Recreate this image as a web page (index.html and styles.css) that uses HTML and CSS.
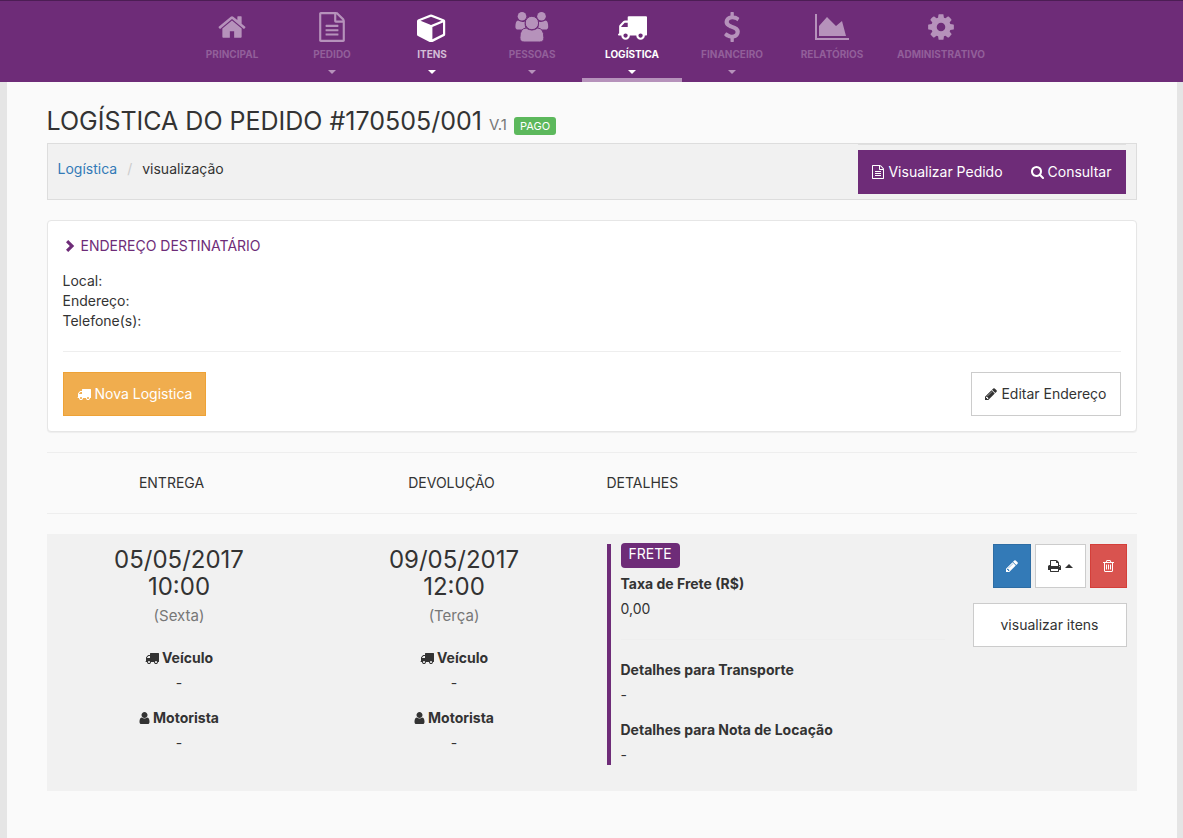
FILE: index.html
```html
<!DOCTYPE html>
<html lang="pt-BR">
<head>
<meta charset="utf-8">
<title>Logística do Pedido</title>
<link rel="stylesheet" href="styles.css">
</head>
<body>
<svg class="sprite" aria-hidden="true">
  <symbol id="truck" viewBox="0 0 1792 1792"><path d="M640 1408q0-52-38-90t-90-38-90 38-38 90 38 90 90 38 90-38 38-90zm-384-512h384v-256h-158q-13 0-22 9l-195 195q-9 9-9 22v30zm1280 512q0-52-38-90t-90-38-90 38-38 90 38 90 90 38 90-38 38-90zm256-1088v1024q0 15-4 26.500t-13.500 18.500-16.500 11.500-23.500 6-22.500 2-25.500 0-22.500-.5q0 106-75 181t-181 75-181-75-75-181h-384q0 106-75 181t-181 75-181-75-75-181h-64q-3 0-22.500.5t-25.500 0-22.500-2-23.500-6-16.500-11.500-13.500-18.500-4-26.500q0-26 19-45t45-19v-320q0-8-.5-35t0-38 2.500-34.500 6.500-37 14-30.500 22.500-30l198-198q19-19 50.500-32t58.500-13h160v-192q0-26 19-45t45-19h1024q26 0 45 19t19 45z"/></symbol>
  <symbol id="home" viewBox="0 0 1792 1792"><path d="M1472 992v480q0 26-19 45t-45 19h-384v-384h-256v384h-384q-26 0-45-19t-19-45v-480q0-1 .5-3t.5-3l575-474 575 474q1 2 1 6zm223-69l-62 74q-8 9-21 11h-3q-13 0-21-7l-692-577-692 577q-12 8-24 7-13-2-21-11l-62-74q-8-10-7-23.500t11-21.500l719-599q32-26 76-26t76 26l244 204v-195q0-14 9-23t23-9h192q14 0 23 9t9 23v408l219 182q10 8 11 21.500t-7 23.500z"/></symbol>
  <symbol id="file" viewBox="128 0 1536 1792"><path d="M1596 380q28 28 48 76t20 88v1152q0 40-28 68t-68 28h-1344q-40 0-68-28t-28-68v-1600q0-40 28-68t68-28h896q40 0 88 20t76 48zm-444-244v376h376q-10-29-22-41l-313-313q-12-12-41-22zm384 1528v-1024h-416q-40 0-68-28t-28-68v-416h-768v1536h1280zm-1024-864q0-14 9-23t23-9h704q14 0 23 9t9 23v64q0 14-9 23t-23 9h-704q-14 0-23-9t-9-23v-64zm736 224q14 0 23 9t9 23v64q0 14-9 23t-23 9h-704q-14 0-23-9t-9-23v-64q0-14 9-23t23-9h704zm0 256q14 0 23 9t9 23v64q0 14-9 23t-23 9h-704q-14 0-23-9t-9-23v-64q0-14 9-23t23-9h704z"/></symbol>
  <symbol id="cube" viewBox="1 -1 30 30"><path fill-rule="evenodd" d="M15 1.500q.6 0 1.200.3l12 4.600q1 .5 1 1.600v13.600q0 1-.9 1.500l-12.300 6.200q-.9.500-1.800 0l-12.200-6.200q-1-.5-1-1.500v-13.600q0-1.100 1-1.600l11.800-4.600q.6-.3 1.200-.3zM15 3.700l-10.500 4 10.500 4.200 10.500-4.200zM27 9.600l-10.600 4.500v12.200l10.600-5.400z"/></symbol>
  <symbol id="group" viewBox="0 0 34 30"><circle cx="7" cy="4.300" r="4.300"/><circle cx="26.500" cy="4.300" r="4.300"/><circle cx="16.900" cy="11" r="6.200"/><path d="M3 8.600q4 2.400 7 .9-1 5 1.500 8h-8.500q-2.600 0-2.600-2.800 0-5.500 2.600-6.100zM30.600 8.600q-4 2.400-7 .9 1 5-1.500 8h8.500q2.600 0 2.600-2.800 0-5.500-2.600-6.100z"/><path class="cutout" d="M11.200 16q5.700 4 11.400 0 6.300.4 6.300 9.800 0 4.200-4.200 4.200h-15.600q-4.200 0-4.200-4.200 0-9.400 6.300-9.800z"/><circle class="cutout" cx="16.900" cy="11" r="6.700"/></symbol>
  <symbol id="dollar" viewBox="0 0 1792 1792"><path d="M1362 1185q0 153-99.500 263.500t-258.500 136.500v175q0 14-9 23t-23 9h-135q-13 0-22.500-9.500t-9.500-22.500v-175q-66-9-127.500-31t-101.500-44.500-74-48-46.500-37.500-17.500-18q-17-21-2-41l103-135q7-10 23-12 15-2 24 9l2 2q113 99 243 125 37 8 74 8 81 0 142.500-43t61.500-122q0-28-15-53t-33.500-42-58.500-37.500-66-32-80-32.500q-39-16-61.500-25t-61.500-26.500-62.500-31-56.500-35.500-53.500-42.500-43.500-49-35.500-58-21-66.500-8.500-78q0-138 98-242t255-134v-180q0-13 9.500-22.500t22.500-9.500h135q14 0 23 9t9 23v176q57 6 110.500 23t87 33.500 63.500 37.500 39 29 15 14q17 18 5 38l-81 146q-8 15-23 16-14 3-27-7-3-3-14.500-12t-39-26.500-58.500-32-74.500-26-85.500-11.500q-95 0-155 43t-60 111q0 26 8.500 48t29.500 41.500 39.500 33 56 31 60.500 27 70 27.500q53 20 81 31.500t76 35 75.500 42.500 62 50 53 63.500 31.500 76.500 13 94z"/></symbol>
  <symbol id="chart" viewBox="0 0 34 30"><path d="M0 2h2v24h32v2H0zM4 14l8-9 9 9 6-5 4 15H4z"/></symbol>
  <symbol id="cog" viewBox="0 0 1792 1792"><path d="M1152 896q0-106-75-181t-181-75-181 75-75 181 75 181 181 75 181-75 75-181zm512-109v222q0 12-8 23t-20 13l-185 28q-19 54-39 91 35 50 107 138 10 12 10 25t-9 23q-27 37-99 108t-94 71q-12 0-26-9l-138-108q-44 23-91 38-16 136-29 186-7 28-36 28h-222q-14 0-24.500-8.500t-11.500-21.500l-28-184q-49-16-90-37l-141 107q-10 9-25 9-14 0-25-11-126-114-165-168-7-10-7-23 0-12 8-23 15-21 51-66.500t54-70.500q-27-50-41-99l-183-27q-13-2-21-12.500t-8-23.500v-222q0-12 8-23t19-13l186-28q14-46 39-92-40-57-107-138-10-12-10-24 0-10 9-23 26-36 98.500-107.500t94.500-71.500q13 0 26 10l138 107q44-23 91-38 16-136 29-186 7-28 36-28h222q14 0 24.500 8.500t11.500 21.500l28 184q49 16 90 37l142-107q9-9 24-9 13 0 25 10 129 119 165 170 7 8 7 22 0 12-8 23-15 21-51 66.500t-54 70.500q26 50 41 98l183 28q13 2 21 12.500t8 23.500z"/></symbol>
  <symbol id="search" viewBox="64 0 1664 1792"><path d="M1216 832q0-185-131.500-316.500t-316.500-131.500-316.500 131.500-131.500 316.500 131.500 316.500 316.500 131.500 316.500-131.500 131.500-316.500zm512 832q0 52-38 90t-90 38q-54 0-90-38l-343-342q-179 124-399 124-143 0-273.500-55.500t-225-150-150-225-55.500-273.500 55.500-273.500 150-225 225-150 273.500-55.500 273.500 55.500 225 150 150 225 55.500 273.500q0 220-124 399l343 343q37 37 37 90z"/></symbol>
  <symbol id="pencil" viewBox="128 0 1536 1792"><path d="M491 1536l91-91-235-235-91 91v107h128v128h107zm523-928q0-22-22-22-10 0-17 7l-542 542q-7 7-7 17 0 22 22 22 10 0 17-7l542-542q7-7 7-17zm-54-192l416 416-832 832h-416v-416zm683 96q0 53-37 90l-166 166-416-416 166-165q36-38 90-38 53 0 91 38l235 234q37 39 37 91z"/></symbol>
  <symbol id="user" viewBox="192 0 1408 1792"><path d="M1536 1399q0 109-62.500 187t-150.500 78h-854q-88 0-150.500-78t-62.500-187q0-85 8.500-160.500t31.500-152 58.500-131 94-89 134.500-34.500q131 128 313 128t313-128q76 0 134.500 34.500t94 89 58.500 131 31.500 152 8.500 160.500zm-256-887q0 159-112.500 271.500t-271.500 112.500-271.500-112.500-112.500-271.500 112.500-271.500 271.500-112.500 271.500 112.500 112.500 271.500z"/></symbol>
  <symbol id="print" viewBox="64 0 1664 1792"><path d="M448 1536h896v-256h-896v256zm0-640h896v-384h-160q-40 0-68-28t-28-68v-160h-640v640zm1152 64q0-26-19-45t-45-19-45 19-19 45 19 45 45 19 45-19 19-45zm128 0v416q0 13-9.500 22.500t-22.500 9.500h-224v160q0 40-28 68t-68 28h-960q-40 0-68-28t-28-68v-160h-224q-13 0-22.500-9.500t-9.500-22.500v-416q0-79 56.500-135.500t135.500-56.500h64v-544q0-40 28-68t68-28h672q40 0 88 20t76 48l152 152q28 28 48 76t20 88v256h64q79 0 135.500 56.500t56.500 135.500z"/></symbol>
  <symbol id="trash" viewBox="192 0 1408 1792"><path d="M704 736v576q0 14-9 23t-23 9h-64q-14 0-23-9t-9-23v-576q0-14 9-23t23-9h64q14 0 23 9t9 23zm256 0v576q0 14-9 23t-23 9h-64q-14 0-23-9t-9-23v-576q0-14 9-23t23-9h64q14 0 23 9t9 23zm256 0v576q0 14-9 23t-23 9h-64q-14 0-23-9t-9-23v-576q0-14 9-23t23-9h64q14 0 23 9t9 23zm128 724v-948h-896v948q0 22 7 40.500t14.500 27 10.500 8.500h832q3 0 10.500-8.500t14.500-27 7-40.500zm-672-1076h448l-48-117q-7-9-17-11h-317q-10 2-17 11zm928 32v64q0 14-9 23t-23 9h-96v948q0 83-47 143.500t-113 60.500h-832q-66 0-113-58.500t-47-141.500v-952h-96q-14 0-23-9t-9-23v-64q0-14 9-23t23-9h309l70-167q15-37 54-63t79-26h320q40 0 79 26t54 63l70 167h309q14 0 23 9t9 23z"/></symbol>
  <symbol id="chevron" viewBox="0 0 14 14"><path d="M3 3.200L5.200 1l6 6-6 6L3 10.800 6.800 7z"/></symbol>
</svg>

<nav class="topnav">
  <a class="nav-item" href="#"><svg class="nav-icon"><use href="#home"/></svg><span>PRINCIPAL</span></a>
  <a class="nav-item" href="#"><svg class="nav-icon"><use href="#file"/></svg><span>PEDIDO</span><i class="caret"></i></a>
  <a class="nav-item hover" href="#"><svg class="nav-icon"><use href="#cube"/></svg><span>ITENS</span><i class="caret"></i></a>
  <a class="nav-item" href="#"><svg class="nav-icon wide"><use href="#group"/></svg><span>PESSOAS</span><i class="caret"></i></a>
  <a class="nav-item active" href="#"><svg class="nav-icon"><use href="#truck"/></svg><span>LOGÍSTICA</span><i class="caret"></i></a>
  <a class="nav-item" href="#"><svg class="nav-icon"><use href="#dollar"/></svg><span>FINANCEIRO</span><i class="caret"></i></a>
  <a class="nav-item" href="#"><svg class="nav-icon wide"><use href="#chart"/></svg><span>RELATÓRIOS</span></a>
  <a class="nav-item" href="#"><svg class="nav-icon"><use href="#cog"/></svg><span>ADMINISTRATIVO</span></a>
</nav>

<main class="page">
  <h1 class="title">LOGÍSTICA DO PEDIDO #170505/001 <small class="version">V.1</small> <span class="badge">PAGO</span></h1>

  <div class="crumbbar">
    <div class="crumbs"><a href="#">Logística</a><span class="slash">/</span><span>visualização</span></div>
    <div class="crumb-actions">
      <button class="btn purple" type="button"><svg class="icon w12"><use href="#file"/></svg>Visualizar Pedido</button>
      <button class="btn purple" type="button"><svg class="icon w13"><use href="#search"/></svg>Consultar</button>
    </div>
  </div>

  <section class="panel">
    <h2 class="panel-title"><svg class="icon"><use href="#chevron"/></svg>ENDEREÇO DESTINATÁRIO</h2>
    <div>Local:</div>
    <div>Endereço:</div>
    <div>Telefone(s):</div>
    <hr>
    <div class="panel-actions">
      <button class="btn orange" type="button"><svg class="icon"><use href="#truck"/></svg>Nova Logistica</button>
      <button class="btn" type="button"><svg class="icon w12"><use href="#pencil"/></svg>Editar Endereço</button>
    </div>
  </section>

  <hr>
  <div class="heads">
    <div>ENTREGA</div>
    <div>DEVOLUÇÃO</div>
    <div class="head-detail">DETALHES</div>
  </div>
  <hr>

  <section class="entry">
    <div class="entry-grid">
      <div class="moment">
        <h3 class="date">05/05/2017<br>10:00</h3>
        <p class="weekday">(Sexta)</p>
        <dl>
          <dt><svg class="icon"><use href="#truck"/></svg>Veículo</dt><dd>-</dd>
          <dt><svg class="icon w11"><use href="#user"/></svg>Motorista</dt><dd>-</dd>
        </dl>
      </div>
      <div class="moment">
        <h3 class="date">09/05/2017<br>12:00</h3>
        <p class="weekday">(Terça)</p>
        <dl>
          <dt><svg class="icon"><use href="#truck"/></svg>Veículo</dt><dd>-</dd>
          <dt><svg class="icon w11"><use href="#user"/></svg>Motorista</dt><dd>-</dd>
        </dl>
      </div>
      <div class="detail-col">
        <div class="detail">
          <span class="tag">FRETE</span>
          <dl>
            <dt>Taxa de Frete (R$)</dt><dd>0,00</dd>
          </dl>
          <hr>
          <dl>
            <dt>Detalhes para Transporte</dt><dd>-</dd>
            <dt>Detalhes para Nota de Locação</dt><dd>-</dd>
          </dl>
        </div>
        <div class="actions">
          <div class="action-row">
            <button class="btn blue" type="button" aria-label="Editar"><svg class="icon w12"><use href="#pencil"/></svg></button>
            <button class="btn" type="button" aria-label="Imprimir"><svg class="icon w13"><use href="#print"/></svg><i class="caret up"></i></button>
            <button class="btn red" type="button" aria-label="Excluir"><svg class="icon w11"><use href="#trash"/></svg></button>
          </div>
          <button class="btn" type="button">visualizar itens</button>
        </div>
      </div>
    </div>
  </section>
</main>
</body>
</html>
```

FILE: styles.css
```css
* { box-sizing: border-box; }

body {
  margin: 0;
  min-height: 100vh;
  display: flex;
  flex-direction: column;
  background: #e5e5e5;
  color: #333;
  font: 14px/20px Inter, "Open Sans", sans-serif;
}

.sprite { position: absolute; width: 0; height: 0; }
svg { fill: currentColor; }
.cutout { stroke: #6e2c78; stroke-width: 1px; }

h1, h2, h3, p, dl, dd { margin: 0; font-weight: 400; }
hr { margin: 20px 0; border: 0; border-top: 1px solid #eee; }

/* Top navigation */
.topnav {
  display: flex;
  justify-content: center;
  height: 82px;
  padding-right: 1px;
  background: #6e2c78;
  border-top: 1px solid #4c1d54;
}
.nav-item {
  min-width: 100px;
  padding: 11px 15px 0;
  display: flex;
  flex-direction: column;
  align-items: center;
  color: #b692bb;
  text-decoration: none;
  font-size: 10px;
  font-weight: 700;
  border-bottom: 4px solid transparent;
}
.nav-item span { line-height: 14px; margin-top: 5px; color: #925f9a; }
.nav-icon { width: 30px; height: 30px; }
.nav-icon.wide { width: 34px; }
.nav-item .caret { margin-top: 9px; }
.nav-item.hover, .nav-item.active { color: #fff; }
.nav-item.hover span { color: #d3bdd6; }
.nav-item.active span { color: #fff; }
.nav-item.active { border-bottom-color: #b692bb; }

.caret {
  border: 4px solid transparent;
  border-top-color: currentColor;
  border-bottom: 0;
}
.caret.up { border-top: 0; border-bottom: 4px solid currentColor; }

/* Page */
.page {
  flex: 1;
  width: 100%;
  max-width: 1170px;
  margin: 0 auto;
  padding: 25px 40px 40px;
  background: #fafafa;
}
.title { font-size: 25px; line-height: 28px; margin-bottom: 8px; }
.version { font-size: 15px; line-height: 16px; color: #777; }
.badge {
  display: inline-block;
  padding: 0 6px;
  border-radius: 3px;
  background: #5cb85c;
  color: #fff;
  font-size: 11px;
  line-height: 18px;
}

.crumbbar {
  display: flex;
  justify-content: space-between;
  min-height: 57px;
  padding: 0 10px 5px;
  border: 1px solid #ddd;
  background: #f1f1f1;
}
.crumbs { padding-top: 15px; }
.crumbs a { color: #337ab7; text-decoration: none; }
.slash { margin: 0 10px; color: #ccc; }
.crumb-actions { display: flex; border-top: 1px solid #e0e0e0; padding-top: 5px; }

.btn {
  display: inline-flex;
  align-items: center;
  justify-content: center;
  gap: 4px;
  height: 44px;
  padding: 0 13px;
  border: 1px solid #ccc;
  background: #fff;
  color: #333;
  font: inherit;
}
.icon { width: 14px; height: 14px; flex: none; }
.icon.w11 { width: 11px; }
.icon.w12 { width: 12px; }
.icon.w13 { width: 13px; }
.btn.purple { background: #6e2c78; border-color: #6e2c78; color: #fff; }
.btn.orange { background: #f0ad4e; border-color: #eea236; color: #fff; }
.btn.blue { background: #337ab7; border-color: #2e6da4; color: #fff; }
.btn.red { background: #d9534f; border-color: #d43f3a; color: #fff; }

.panel {
  margin-top: 20px;
  padding: 15px;
  border: 1px solid #e6e6e6;
  border-radius: 4px;
  background: #fff;
  box-shadow: 0 1px 1px rgba(0, 0, 0, .05);
}
.panel-title {
  display: flex;
  align-items: center;
  gap: 4px;
  margin-bottom: 15px;
  color: #6e2c78;
  font-size: 14px;
  line-height: 20px;
}
.panel-actions { display: flex; justify-content: space-between; }

/* Column headings */
.heads {
  display: grid;
  grid-template-columns: 1fr 1fr 2fr;
  margin: 0 -15px;
  text-align: center;
}
.head-detail { padding-left: 15px; text-align: left; }

/* Logistics entry */
.entry { padding: 10px 0 26px; background: #f1f1f1; }
.entry-grid { display: grid; grid-template-columns: 1fr 1fr 2fr; margin: 0 -5px; }
.moment { padding-top: 2px; text-align: center; }
.date { font-size: 24px; line-height: 27px; }
.weekday { margin: 6px 0 22px; color: #777; font-size: 15px; }
dt { display: flex; align-items: center; gap: 3px; margin-bottom: 5px; font-weight: 700; }
.moment dt { justify-content: center; }
dd + dt { margin-top: 15px; }

.detail-col {
  display: grid;
  grid-template-columns: 1fr 154px;
  gap: 28px;
  align-items: start;
  padding: 0 15px;
}
.detail { padding-left: 10px; border-left: 4px solid #6e2c78; }
.tag {
  display: block;
  width: fit-content;
  margin: -1px 0 6px;
  padding: 0 8px 3px;
  border-radius: 4px;
  background: #6e2c78;
  color: #fff;
  line-height: 22px;
}
.actions { display: flex; flex-direction: column; gap: 15px; }
.action-row { display: flex; justify-content: flex-end; gap: 4px; }
.action-row .btn { padding: 0 12px; }
```
